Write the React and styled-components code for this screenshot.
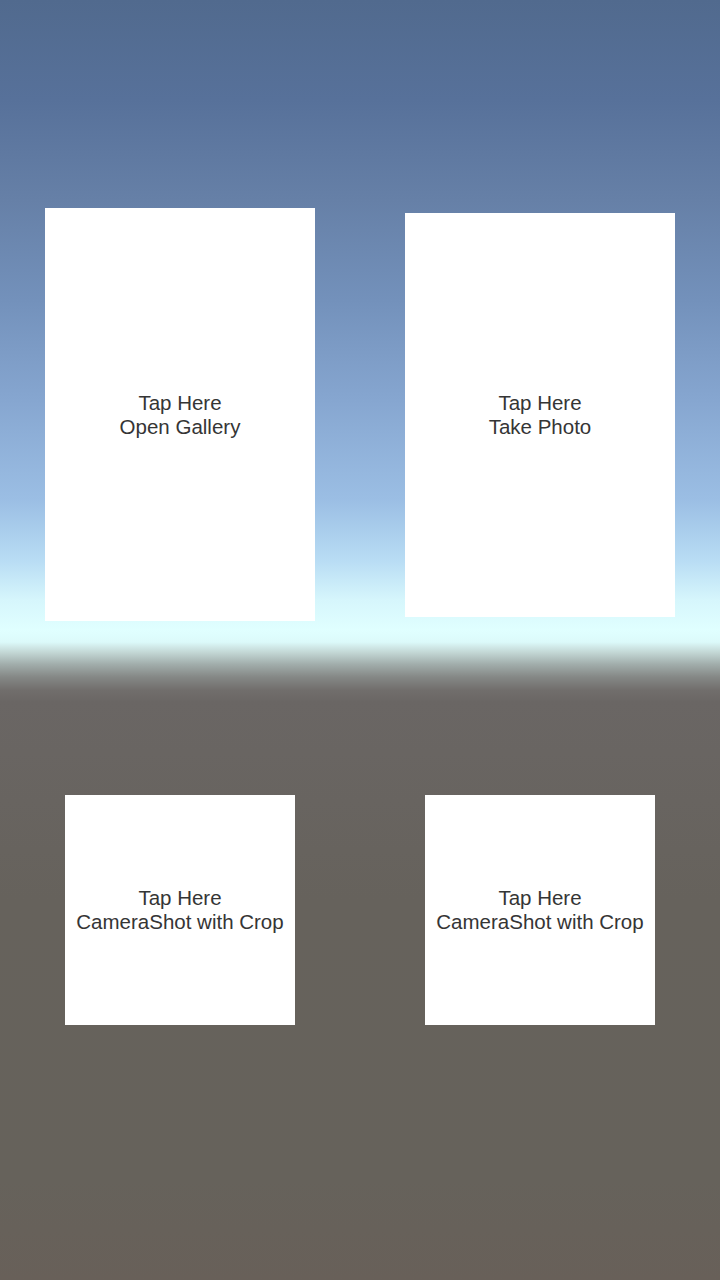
import styled, { createGlobalStyle } from 'styled-components';

const GlobalStyle = createGlobalStyle`
  html, body {
    margin: 0;
    padding: 0;
  }
  body {
    font-family: "Liberation Sans", Arial, sans-serif;
  }
`;

const App = () => {
  return (
    <Screen>
      <GlobalStyle />
      <Board>
        <Cell>
          <Card w={270} h={413}>
            <Label>Tap Here<br />Open Gallery</Label>
          </Card>
        </Cell>
        <Cell offset={5}>
          <Card w={270} h={404}>
            <Label>Tap Here<br />Take Photo</Label>
          </Card>
        </Cell>
        <Cell gap={174}>
          <Card w={230} h={230}>
            <Label>Tap Here<br />CameraShot with Crop</Label>
          </Card>
        </Cell>
        <Cell gap={174}>
          <Card w={230} h={230}>
            <Label>Tap Here<br />CameraShot with Crop</Label>
          </Card>
        </Cell>
      </Board>
    </Screen>
  );
};

const Screen = styled.div`
  width: 720px;
  height: 1280px;
  box-sizing: border-box;
  padding-top: 208px;
  overflow: hidden;
  background: linear-gradient(
    to bottom,
    #516a8e 0px,
    #57719a 100px,
    #6680a7 200px,
    #7391bb 300px,
    #86a6d0 400px,
    #9bbee4 500px,
    #b8dcf4 560px,
    #d6f6fc 600px,
    #e0ffff 630px,
    #dcfafa 642px,
    #c4d8d6 652px,
    #a2aeac 664px,
    #858886 677px,
    #716e6c 690px,
    #6a6664 702px,
    #66625c 900px,
    #66625b 1180px,
    #686059 1280px
  );
`;

const Board = styled.div`
  display: grid;
  grid-template-columns: 360px 360px;
  align-items: start;
`;

const Cell = styled.div`
  display: flex;
  justify-content: center;
  padding-top: ${({ offset }) => offset || 0}px;
  margin-top: ${({ gap }) => gap || 0}px;
`;

const Card = styled.div`
  width: ${({ w }) => w}px;
  height: ${({ h }) => h}px;
  background: #ffffff;
  display: flex;
  align-items: center;
  justify-content: center;
`;

const Label = styled.div`
  font-size: 20.5px;
  line-height: 24px;
  color: #353535;
  text-align: center;
  white-space: nowrap;
`;

export default App;
